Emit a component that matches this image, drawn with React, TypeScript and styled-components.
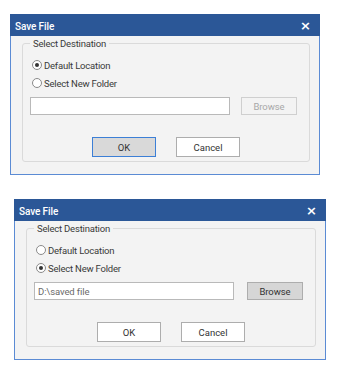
import React from "react";
import styled, { createGlobalStyle } from "styled-components";

const Global = createGlobalStyle`
  html, body { margin: 0; padding: 0; background: #ffffff; }
  body { font-family: Roboto, "Liberation Sans", Arial, sans-serif; }
  * { box-sizing: border-box; }
`;

const Page = styled.div`
  display: flex;
  flex-direction: column;
  align-items: flex-start;
  gap: 24px;
  padding: 14px 0 0 10px;
`;

const Dialog = styled.div<{ $w: number; $ml: number }>`
  width: ${(p) => p.$w}px;
  margin-left: ${(p) => p.$ml}px;
  border: 1px solid #5b8bd4;
  border-top: none;
  background: #f3f3f3;
  display: flex;
  flex-direction: column;
`;

const TitleBar = styled.div`
  height: 22px;
  background: #2b5797;
  display: flex;
  align-items: center;
  justify-content: space-between;
  padding: 0 9px 0 5px;
  margin: 0 -1px;
  color: #ffffff;
`;

const Title = styled.span`
  font-size: 10px;
  font-weight: 500;
  letter-spacing: -0.1px;
  padding-top: 2px;
`;

const Close = styled.span`
  font-size: 13px;
  font-weight: 700;
  line-height: 1;
  font-family: "DejaVu Sans", sans-serif;
`;

const Body = styled.div`
  padding: 1px 9px 12px 11px;
`;

const Group = styled.fieldset`
  margin: 0;
  min-width: 0;
  border: 1px solid #dadada;
  border-radius: 3px;
  padding: 0 12px 4px 7px;
  display: flex;
  flex-direction: column;
`;

const Legend = styled.legend`
  margin-left: 0;
  padding: 1px 3px 0;
  font-size: 9.5px;
  line-height: 12px;
  color: #3a3a3a;
  letter-spacing: -0.2px;
`;

const RadioRow = styled.label`
  display: flex;
  align-items: center;
  gap: 2px;
  height: 18px;
  font-size: 9.5px;
  color: #3a3a3a;
  letter-spacing: -0.2px;
  &:first-of-type { margin-top: 6px; }
`;

const RadioCircle = styled.span<{ $on: boolean }>`
  width: 10px;
  height: 10px;
  border-radius: 50%;
  border: 1px solid #8a8a8a;
  background: #ffffff;
  display: inline-flex;
  align-items: center;
  justify-content: center;
  margin-left: 2px;
  &::after {
    content: "";
    width: 4px;
    height: 4px;
    border-radius: 50%;
    background: ${(p) => (p.$on ? "#333333" : "transparent")};
  }
`;

const PathRow = styled.div`
  display: flex;
  align-items: center;
  justify-content: space-between;
  margin-top: 5px;
`;

const PathInput = styled.div`
  width: 200px;
  height: 18px;
  border: 1px solid #b9b9b9;
  background: #ffffff;
  font-size: 9.5px;
  color: #6a6a6a;
  padding-left: 3px;
  display: flex;
  align-items: center;
  letter-spacing: -0.1px;
`;

const BrowseButton = styled.div<{ $enabled: boolean }>`
  width: 56px;
  height: 18px;
  display: flex;
  align-items: center;
  justify-content: center;
  font-size: 9.5px;
  letter-spacing: -0.1px;
  border: 1px solid ${(p) => (p.$enabled ? "#adadad" : "#cfcfcf")};
  background: ${(p) => (p.$enabled ? "#d6d6d6" : "#f3f3f3")};
  color: ${(p) => (p.$enabled ? "#333333" : "#a8a8a8")};
`;

const ButtonRow = styled.div`
  display: flex;
  justify-content: center;
  gap: 20px;
  margin-top: 22px;
  padding-left: 5px;
`;

const Button = styled.div<{ $focused?: boolean }>`
  width: 64px;
  height: 20px;
  display: flex;
  align-items: center;
  justify-content: center;
  font-size: 9.5px;
  color: #333333;
  border: 1px solid ${(p) => (p.$focused ? "#3c7fd6" : "#adadad")};
  background: ${(p) => (p.$focused ? "#d9d9d9" : "#ffffff")};
`;

type Props = {
  width: number;
  ml: number;
  newFolder: boolean;
};

function SaveDialog({ width, ml, newFolder }: Props) {
  return (
    <Dialog $w={width} $ml={ml}>
      <TitleBar>
        <Title>Save File</Title>
        <Close>×</Close>
      </TitleBar>
      <Body>
        <Group>
          <Legend>Select Destination</Legend>
          <RadioRow>
            <RadioCircle $on={!newFolder} />
            Default Location
          </RadioRow>
          <RadioRow>
            <RadioCircle $on={newFolder} />
            Select New Folder
          </RadioRow>
          <PathRow>
            <PathInput>{newFolder ? "D:\\saved file" : ""}</PathInput>
            <BrowseButton $enabled={newFolder}>Browse</BrowseButton>
          </PathRow>
          <ButtonRow>
            <Button $focused={!newFolder}>OK</Button>
            <Button>Cancel</Button>
          </ButtonRow>
        </Group>
      </Body>
    </Dialog>
  );
}

export default function App() {
  return (
    <>
      <Global />
      <Page>
        <SaveDialog width={310} ml={0} newFolder={false} />
        <SaveDialog width={312} ml={4} newFolder={true} />
      </Page>
    </>
  );
}
